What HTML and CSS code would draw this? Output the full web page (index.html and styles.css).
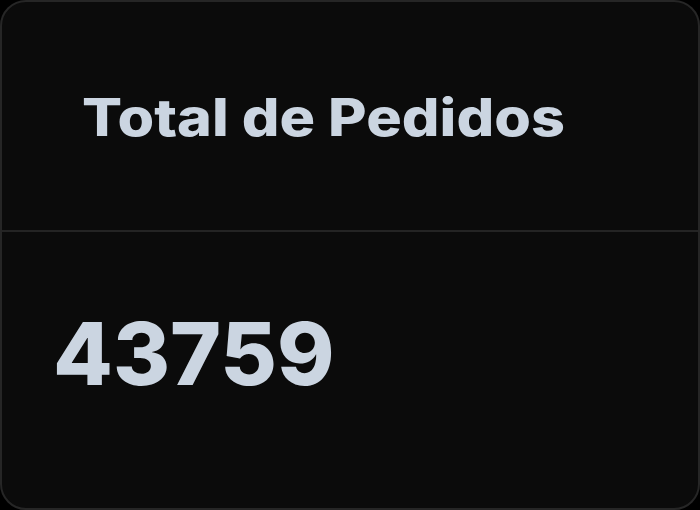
FILE: index.html
```html
<!DOCTYPE html>
<html lang="es">
<head>
    <meta charset="UTF-8">
    <meta name="viewport" content="width=device-width, initial-scale=1.0">
    <title>Total de Pedidos</title>
    <link rel="stylesheet" href="styles.css">
</head>
<body>
    <div class="card">
        <div class="card-header">
            <h2 class="card-title">Total de Pedidos</h2>
        </div>
        <div class="card-content">
            <p class="total">43759</p>
        </div>
    </div>
</body>
</html>
```

FILE: styles.css
```css
html, body {
    margin: 0;
    padding: 0;
    background-color: #000;
}
body {
    font-family: Inter, "Noto Sans", sans-serif;
    color: #cbd5e1;
}
.card {
    box-sizing: border-box;
    width: 700px;
    height: 510px;
    background-color: #0b0b0b;
    border: 2px solid #262626;
    border-radius: 26px;
    display: flex;
    flex-direction: column;
    overflow: hidden;
}
.card-header {
    box-sizing: border-box;
    height: 230px;
    padding: 0 0 0 80px;
    display: flex;
    align-items: center;
    border-bottom: 2px solid #242424;
}
.card-title {
    margin: 2px 0 0 0;
    font-size: 52px;
    font-weight: 800;
    letter-spacing: 0;
    transform: scaleX(1.14);
    transform-origin: left center;
}
.card-content {
    flex: 1;
    display: flex;
    align-items: center;
    padding: 0 0 34px 51px;
}
.total {
    margin: 0;
    font-size: 87px;
    font-weight: 800;
    line-height: 1;
}
```
